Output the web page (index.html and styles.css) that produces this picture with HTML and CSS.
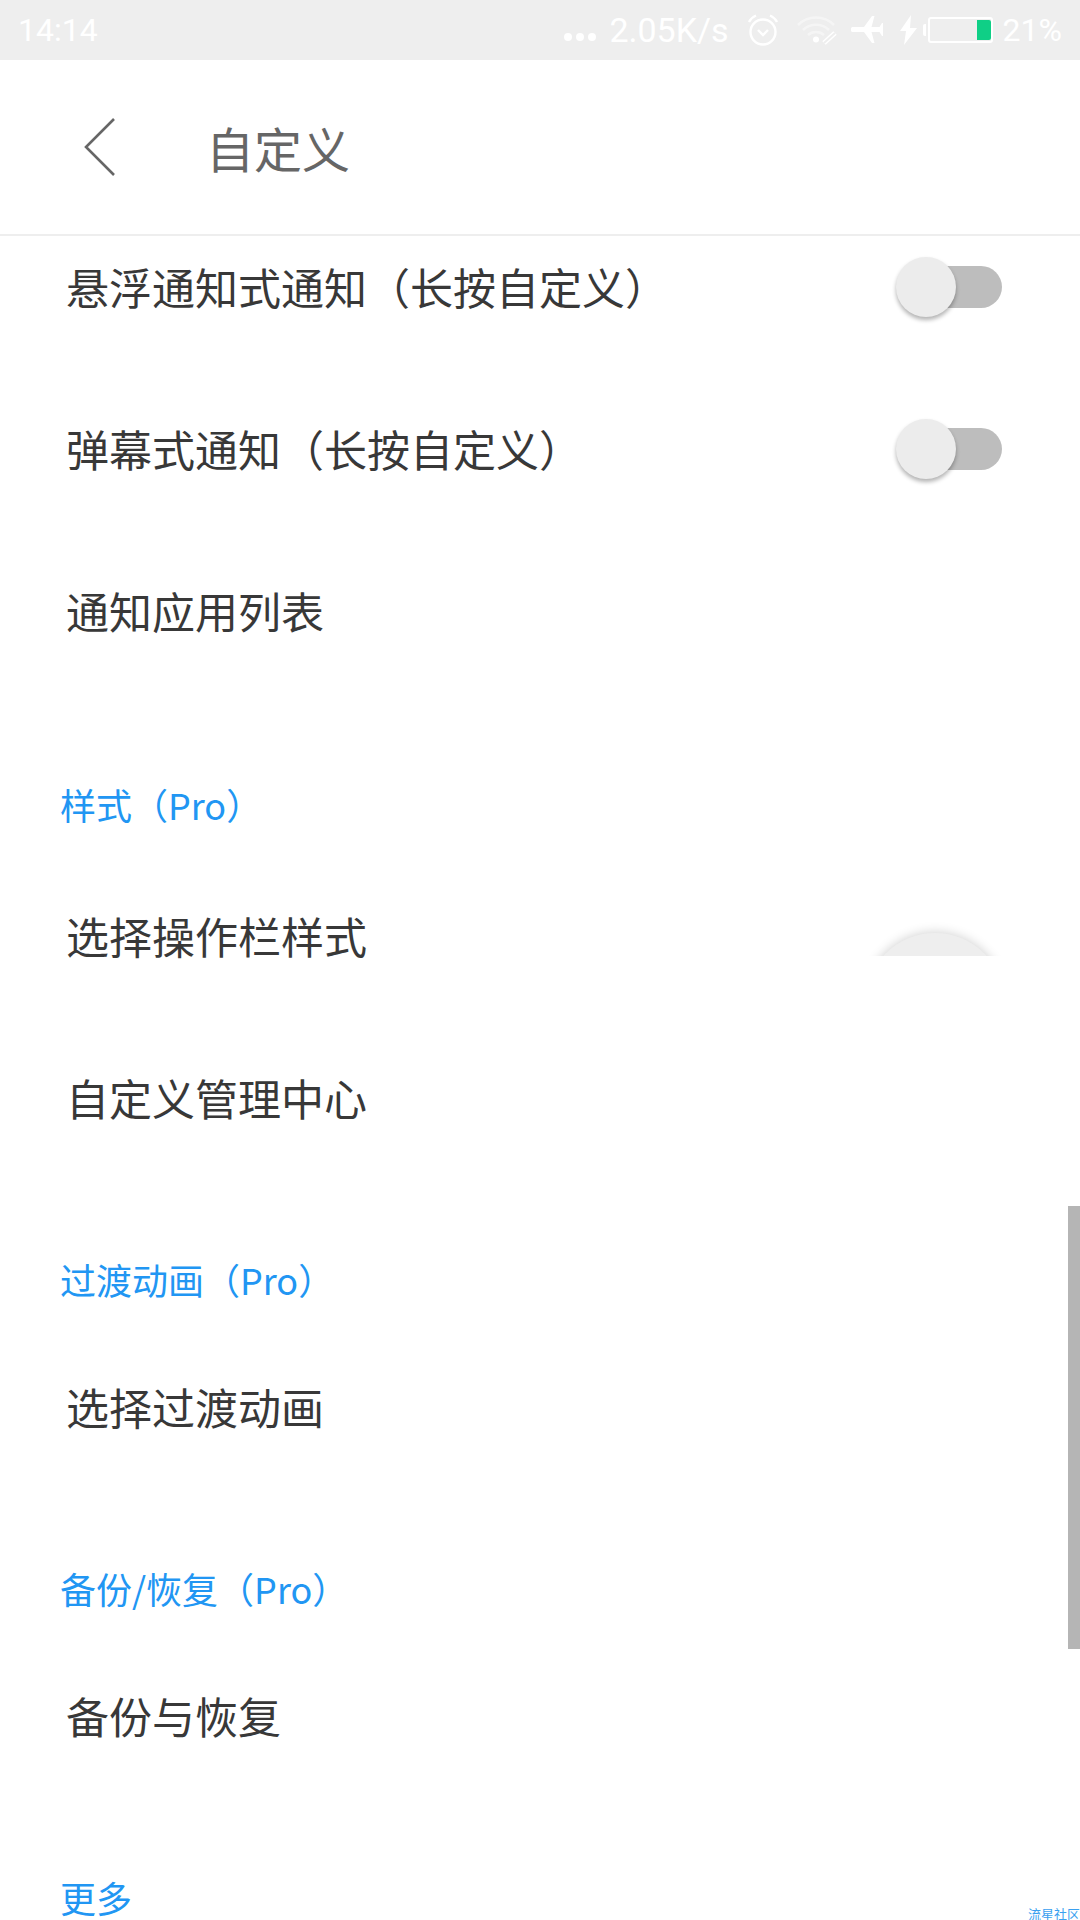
FILE: index.html
```html
<!DOCTYPE html>
<html lang="zh-CN">
<head>
  <meta charset="UTF-8">
  <meta name="viewport" content="width=device-width, initial-scale=1.0">
  <title>自定义</title>
  <link rel="stylesheet" href="styles.css">
</head>
<body>
  <div class="statusbar">
    <span class="time">14:14</span>
    <div class="status-right">
      <svg class="dots" width="32" height="10" viewBox="0 0 32 10"><circle cx="4" cy="5" r="4"/><circle cx="16" cy="5" r="4"/><circle cx="28" cy="5" r="4"/></svg>
      <span class="speed">2.05K/s</span>
      <svg class="alarm" width="32" height="34" viewBox="0 0 32 34" fill="none" stroke="#fff"><circle cx="16" cy="19" r="12.5" stroke-width="2.4"/><path d="M11 17l5 5 5-5" stroke-width="2.4"/><path d="M2 9c1.500-3 3.500-5 7-6.500M30 9c-1.500-3-3.500-5-7-6.500" stroke-width="2.400"/></svg>
      <svg class="wifi" width="40" height="30" viewBox="0 0 40 30" fill="none" stroke="#fff"><g opacity=".45" stroke-width="2.500"><path d="M1 10c10-10 26-10 36 0"/><path d="M6 15c7-7 19-7 26 0"/><path d="M11 20c4-4 12-4 16 0"/></g><circle cx="19" cy="24.500" r="3" fill="#fff" stroke="none"/><path d="M27 28l11-10" stroke-width="5"/><path d="M27 28l11-10" stroke="#eee" stroke-width="2"/></svg>
      <svg class="plane" width="32" height="30" viewBox="0 0 32 30" fill="#fff"><path d="M0 13.500c0-1 1-1.500 2-1.500h11L21 1h2.500l-3 11h8l2.500-4h1.500v13H31l-2.500-4h-8l3 11H21l-8-11H2c-1 0-2-.5-2-1.500z"/></svg>
      <svg class="bolt" width="17" height="30" viewBox="0 0 17 30" fill="#fff"><path d="M11 0L0 16h6L4 30l13-17h-7z"/></svg>
      <div class="battery-nub"></div>
      <div class="battery"><div class="battery-fill"></div></div>
      <span class="percent">21%</span>
    </div>
  </div>

  <header class="topbar">
    <svg class="back" width="32" height="60" viewBox="0 0 32 60" fill="none"><path d="M30 2L2 30l28 28" stroke="#666" stroke-width="2.600"/></svg>
    <h1>自定义</h1>
  </header>

  <main class="content">
    <div class="list">
      <div class="row">悬浮通知式通知（长按自定义）<span class="toggle"></span></div>
      <div class="row">弹幕式通知（长按自定义）<span class="toggle"></span></div>
      <div class="row">通知应用列表</div>
      <div class="section section-first">样式（Pro）</div>
      <div class="row">选择操作栏样式</div>
      <div class="row">自定义管理中心</div>
      <div class="section">过渡动画（Pro）</div>
      <div class="row">选择过渡动画</div>
      <div class="section">备份/恢复（Pro）</div>
      <div class="row">备份与恢复</div>
      <div class="section">更多</div>
    </div>
    <div class="fab-clip"><div class="fab"></div></div>
    <div class="scrollbar"></div>
  </main>
  <div class="watermark">流星社区</div>
</body>
</html>
```

FILE: styles.css
```css
html, body {
  margin: 0;
  padding: 0;
  height: 1920px;
  overflow: hidden;
  background: #fff;
  font-family: "Noto Sans CJK SC", "Noto Sans", sans-serif;
}

.statusbar {
  height: 60px;
  background: #eee;
  color: #fff;
  display: flex;
  align-items: center;
  justify-content: space-between;
  padding: 0 18px 0 18px;
  font-family: Roboto, sans-serif;
  font-size: 32px;
}

.status-right {
  display: flex;
  align-items: center;
}

.dots { fill: #fff; margin-top: 14px; margin-right: 13px; }
.speed { font-size: 34px; margin-right: 18px; }
.alarm { margin-right: 18px; }
.wifi { margin-right: 14px; }
.plane { margin-right: 17px; }
.bolt { margin-right: 6px; }

.battery-nub {
  width: 3px;
  height: 12px;
  background: #fff;
  border-radius: 2px 0 0 2px;
  margin-right: 2px;
}

.battery {
  box-sizing: border-box;
  width: 65px;
  height: 26px;
  border: 2px solid #fff;
  border-radius: 3px;
  margin-right: 10px;
  padding: 1px 0;
  display: flex;
  justify-content: flex-end;
}

.battery-fill {
  width: 14px;
  background: #0fcf86;
  border-radius: 0 2px 2px 0;
}

.topbar {
  height: 174px;
  border-bottom: 2px solid #eee;
  display: flex;
  align-items: center;
  padding-left: 84px;
}

.topbar h1 {
  margin: 0 0 0 90px;
  font-size: 48px;
  font-weight: 400;
  color: #666;
}

.content {
  position: relative;
  height: 1684px;
  overflow: hidden;
}

.list {
  margin-top: -31px;
}

.row {
  height: 162px;
  padding: 0 78px 0 66px;
  display: flex;
  align-items: center;
  justify-content: space-between;
  font-size: 43px;
  color: #383838;
}

.section {
  padding: 77px 0 22px 60px;
  font-size: 36px;
  line-height: 48px;
  color: #2196f3;
}

.section-first {
  padding-top: 89px;
  padding-bottom: 26px;
}

.toggle {
  position: relative;
  top: 1px;
  width: 94px;
  height: 42px;
  border-radius: 21px;
  background: #bdbdbd;
}

.toggle::before {
  content: "";
  position: absolute;
  left: -12px;
  top: -9px;
  width: 60px;
  height: 60px;
  border-radius: 50%;
  background: #ececec;
  box-shadow: 0 3px 4px rgba(0, 0, 0, 0.3);
}

.fab-clip {
  position: absolute;
  left: 780px;
  top: 660px;
  width: 300px;
  height: 60px;
  overflow: hidden;
}

.fab {
  position: absolute;
  left: 85px;
  top: 37px;
  width: 140px;
  height: 140px;
  border-radius: 50%;
  background: #eee;
  box-shadow: 0 0 12px rgba(0, 0, 0, 0.2);
}

.scrollbar {
  position: absolute;
  right: 0;
  top: 970px;
  width: 12px;
  height: 443px;
  background: #b5b5b5;
}

.watermark {
  position: absolute;
  right: 0;
  bottom: -3px;
  font-size: 13px;
  line-height: 18px;
  color: #3aa0f0;
}
```
